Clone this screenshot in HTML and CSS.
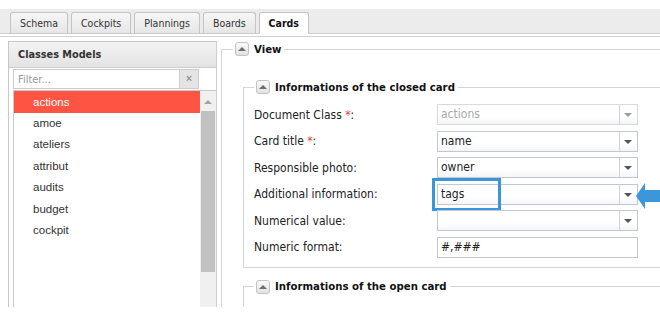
FILE: index.html
```html
<!DOCTYPE html>
<html lang="en">
<head>
    <meta charset="UTF-8">
    <meta name="viewport" content="width=device-width, initial-scale=1.0">
    <title>Cards</title>
    <link rel="stylesheet" href="styles.css">
</head>
<body>
    <div class="tabbar">
        <div class="tab">Schema</div>
        <div class="tab">Cockpits</div>
        <div class="tab">Plannings</div>
        <div class="tab">Boards</div>
        <div class="tab active">Cards</div>
    </div>

    <div class="workspace">
        <aside class="classes">
            <div class="classes-head">Classes Models</div>
            <div class="filter">
                <input type="text" placeholder="Filter...">
                <span class="filter-clear">&#x2715;</span>
            </div>
            <div class="class-list">
                <ul>
                    <li class="selected">actions</li>
                    <li>amoe</li>
                    <li>ateliers</li>
                    <li>attribut</li>
                    <li>audits</li>
                    <li>budget</li>
                    <li>cockpit</li>
                </ul>
                <div class="scrollbar">
                    <span class="scroll-up"></span>
                    <span class="scroll-thumb"></span>
                </div>
            </div>
        </aside>

        <fieldset class="view">
            <legend><span class="toggle"></span>View</legend>

            <fieldset class="card-section">
                <legend><span class="toggle"></span>Informations of the closed card</legend>
                <div class="form-grid">
                    <label>Document Class <span class="req">*</span>:</label>
                    <div class="select disabled"><span class="value">actions</span><span class="arrow"></span></div>

                    <label>Card title <span class="req">*</span>:</label>
                    <div class="select"><span class="value">name</span><span class="arrow"></span></div>

                    <label>Responsible photo:</label>
                    <div class="select"><span class="value">owner</span><span class="arrow"></span></div>

                    <label>Additional information:</label>
                    <div class="select marked">
                        <span class="value">tags</span><span class="arrow"></span>
                        <span class="highlight"></span>
                        <svg class="pointer" width="24" height="26" viewBox="0 0 24 26">
                            <polygon points="0,13 9,0 9,7 24,7 24,19 9,19 9,26" fill="#3b97d9"/>
                        </svg>
                    </div>

                    <label>Numerical value:</label>
                    <div class="select"><span class="value"></span><span class="arrow"></span></div>

                    <label>Numeric format:</label>
                    <div class="select text"><span class="value">#,###</span></div>
                </div>
            </fieldset>

            <fieldset class="card-section open-card">
                <legend><span class="toggle"></span>Informations of the open card</legend>
            </fieldset>
        </fieldset>
    </div>
</body>
</html>
```

FILE: styles.css
```css
body {
    margin: 0;
    padding-top: 9px;
    height: 314px;
    overflow: hidden;
    background-color: #fff;
    font-family: "DejaVu Sans Condensed", "DejaVu Sans", sans-serif;
    font-size: 12px;
    color: #222;
}

/* top tabs */
.tabbar {
    display: flex;
    align-items: flex-end;
    gap: 3px;
    height: 24px;
    padding-left: 10px;
    background-color: #ececec;
    border-bottom: 1px solid #c9c9c9;
}

.tab {
    height: 20px;
    line-height: 20px;
    padding: 0 9px;
    margin-bottom: -1px;
    border: 1px solid #c4c4c4;
    border-bottom: 1px solid #c9c9c9;
    border-radius: 3px 3px 0 0;
    background: linear-gradient(#f6f6f6, #e6e6e6);
    font-size: 10.5px;
    color: #333;
}

.tab.active {
    background: #fff;
    border-bottom-color: #fff;
    font-weight: bold;
    color: #111;
}

.workspace {
    display: flex;
    align-items: flex-start;
    height: 270px;
    margin-top: 2px;
    border-top: 1px solid #d2d2d2;
    overflow: hidden;
}

/* left panel */
.classes {
    flex: none;
    width: 207px;
    height: 300px;
    margin: 4px 0 0 8px;
    border: 1px solid #c6c6c6;
    border-right-color: #cfcfcf;
}

.classes-head {
    height: 25px;
    line-height: 25px;
    padding-left: 9px;
    background: linear-gradient(#f3f3f3, #e3e3e3);
    border-bottom: 1px solid #cdcdcd;
    font-family: "DejaVu Sans Condensed", "DejaVu Sans", sans-serif;
    font-weight: bold;
    font-size: 10.8px;
    color: #333;
}

.filter {
    display: flex;
    width: 186px;
    height: 20px;
    margin: 1px 0 1px 4px;
    border: 1px solid #c9ccd6;
    box-sizing: border-box;
}

.filter input {
    flex: 1;
    min-width: 0;
    border: none;
    padding: 0 4px;
    font-family: "DejaVu Sans Condensed", "DejaVu Sans", sans-serif;
    font-size: 11px;
    outline: none;
}

.filter input::placeholder {
    color: #999;
}

.filter-clear {
    width: 18px;
    background-color: #e4e4e4;
    border-left: 1px solid #cfcfcf;
    color: #888;
    font-size: 10px;
    font-weight: bold;
    text-align: center;
    line-height: 18px;
}

.class-list {
    display: flex;
    height: 240px;
    margin-left: 4px;
    border: 1px solid #c9c9c9;
    border-right: none;
}

.class-list ul {
    flex: 1;
    list-style: none;
    margin: 0;
    padding: 0;
    font-family: "Liberation Sans", Arial, sans-serif;
    font-size: 11.5px;
    color: #333;
}

.class-list li {
    height: 21.4px;
    line-height: 21.4px;
    padding-left: 19px;
}

.class-list li.selected {
    height: 22px;
    line-height: 22px;
    background-color: #fe5443;
    color: #fff;
}

.scrollbar {
    display: flex;
    flex-direction: column;
    width: 16px;
    background-color: #f0f0f0;
}

.scroll-up {
    height: 20px;
    position: relative;
}

.scroll-up::after {
    content: "";
    position: absolute;
    left: 4px;
    top: 9px;
    border-left: 4px solid transparent;
    border-right: 4px solid transparent;
    border-bottom: 4px solid #a3a3a3;
}

.scroll-thumb {
    height: 161px;
    margin: 0 1px;
    background-color: #c1c1c1;
}

/* right form */
fieldset {
    margin: 0;
    border: 1px solid #d4d4d8;
    min-width: 0;
}

legend {
    display: flex;
    align-items: center;
    height: 14px;
    padding: 0 3px 0 2px;
    font-family: "DejaVu Sans Condensed", "DejaVu Sans", sans-serif;
    font-weight: bold;
    font-size: 11.3px;
    color: #111;
}

.toggle {
    position: relative;
    width: 12px;
    height: 12px;
    margin-right: 5px;
    border: 1px solid #c3c3c3;
    border-radius: 3px;
    background: linear-gradient(#fbfbfb, #e2e2e2);
}

.toggle::after {
    content: "";
    position: absolute;
    left: 2px;
    top: 4px;
    border-left: 4px solid transparent;
    border-right: 4px solid transparent;
    border-bottom: 4px solid #6d6d6d;
}

.view {
    flex: none;
    width: 480px;
    height: 320px;
    margin: 5px 0 0 4px;
    padding: 24px 0 0 11px;
}

.card-section {
    margin-left: 10px;
    padding: 10px 0 9px 10px;
}

.form-grid {
    display: grid;
    grid-template-columns: 183px 201px;
    grid-auto-rows: 21px;
    row-gap: 5.6px;
    align-items: center;
}

.form-grid label {
    color: #222;
}

.req {
    color: #e8413a;
}

.select {
    position: relative;
    display: flex;
    height: 21px;
    box-sizing: border-box;
    border: 1px solid #c3c7d5;
    background: linear-gradient(#fff 60%, #f4f5f8);
}

.select .value {
    flex: 1;
    padding-left: 3px;
    line-height: 19px;
    color: #222;
}

.select .arrow {
    position: relative;
    width: 17px;
    border-left: 1px solid #cfd2dc;
}

.select .arrow::after {
    content: "";
    position: absolute;
    left: 4px;
    top: 8px;
    border-left: 4.5px solid transparent;
    border-right: 4.5px solid transparent;
    border-top: 4px solid #4f5464;
}

.select.disabled {
    border-color: #d8dae2;
}

.select.disabled .value {
    color: #a8a8a8;
}

.select.disabled .arrow::after {
    border-top-color: #9a9ca6;
}

.select.text {
    background: #fff;
}

.highlight {
    position: absolute;
    left: -6px;
    top: -7px;
    width: 63px;
    height: 27px;
    border: 3px solid #3a96d8;
}

.pointer {
    position: absolute;
    left: 198px;
    top: -2px;
}

.open-card {
    margin-top: 12px;
    height: 60px;
}
```
